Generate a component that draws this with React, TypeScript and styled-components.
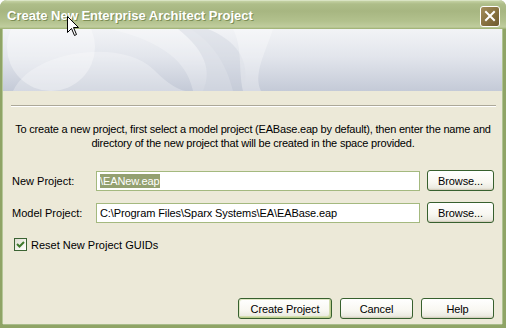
import React from "react";
import styled, { createGlobalStyle } from "styled-components";

const Global = createGlobalStyle`
  html, body { margin: 0; padding: 0; background: #ffffff; }
  body { font-family: Tahoma, "Liberation Sans", Arial, sans-serif; }
  * { box-sizing: border-box; }
`;

const Window = styled.div`
  position: relative;
  width: 506px;
  height: 328px;
  display: flex;
  flex-direction: column;
  background: #8fa466;
  border-radius: 7px 7px 0 0;
  overflow: hidden;
`;

const TitleBar = styled.div`
  height: 29px;
  flex: none;
  display: flex;
  align-items: center;
  justify-content: space-between;
  padding: 0 6px 0 7px;
  background: linear-gradient(
    to bottom,
    #c4d1a3 0px,
    #aebd89 3px,
    #a7b681 10px,
    #b2c18d 20px,
    #c0cd9e 26px,
    #9aae6e 28px,
    #8aa062 29px
  );
  border-top: 1px solid #d9e3c3;
`;

const TitleText = styled.span`
  font-family: "Liberation Sans", Arial, sans-serif;
  font-weight: bold;
  font-size: 13px;
  letter-spacing: 0px;
  color: #ffffff;
  text-shadow: 1px 1px 0 #7c8d55;
  margin-top: 1px;
`;

const CloseButton = styled.div`
  width: 20px;
  height: 21px;
  margin-top: 2px;
  border: 1px solid #ffffff;
  border-radius: 3px;
  background: linear-gradient(135deg, #a38d5c 0%, #86703f 55%, #6e5a30 100%);
  display: flex;
  align-items: center;
  justify-content: center;
`;

const Frame = styled.div`
  flex: 1;
  display: flex;
  flex-direction: column;
  margin: 0 4px 4px 3px;
  background: #ece9d8;
  box-shadow: -1px 0 0 #b5c798, 1px 0 0 #b0c392, 0 1px 0 #a9bc8b;
`;

const Banner = styled.div`
  height: 62px;
  flex: none;
  position: relative;
  overflow: hidden;
  background: linear-gradient(to bottom, #f2f3f6 0%, #e2e5ec 45%, #c4cad7 100%);
`;

const Watermark = styled.svg`
  position: absolute;
  left: 0;
  top: 0;
`;

const Content = styled.div`
  flex: 1;
  display: flex;
  flex-direction: column;
  padding: 14px 8px 0 9px;
  font-family: "Liberation Sans", Arial, sans-serif;
  font-size: 11px;
  color: #000000;
`;

const Separator = styled.div`
  height: 2px;
  margin: 0 -2px 0 -1px;
  border-top: 1px solid #aca899;
  border-bottom: 1px solid #ffffff;
`;

const Intro = styled.p`
  margin: 15px -4px 0 -4px;
  line-height: 14px;
  text-align: center;
  white-space: nowrap;
  letter-spacing: -0.2px;
`;

const Form = styled.div`
  margin-top: 20px;
  display: grid;
  grid-template-columns: 77px 1fr 67px;
  column-gap: 7px;
  row-gap: 11px;
  align-items: center;
`;

const Label = styled.span`
  line-height: 14px;
`;

const Input = styled.div`
  height: 20px;
  border: 1px solid #a4b97f;
  background: #ffffff;
  display: flex;
  align-items: center;
  padding-left: 3px;
  white-space: nowrap;
  overflow: hidden;
  letter-spacing: -0.1px;
`;

const Selected = styled.span`
  background: #93a070;
  color: #ffffff;
  line-height: 14px;
`;

const Button = styled.div<{ $default?: boolean; $w?: number }>`
  height: 21px;
  width: ${(p) => (p.$w ? `${p.$w}px` : "auto")};
  border: 1px solid #37602e;
  border-radius: 3px;
  background: linear-gradient(to bottom, #ffffff 0%, #f8f7f1 60%, #ecebe2 88%, #d8d5c4 100%);
  display: flex;
  align-items: center;
  justify-content: center;
  box-shadow: ${(p) =>
    p.$default
      ? "inset -1px -1px 0 #bdcc8e, inset 1px 1px 0 #dfe8c4, inset -2px -2px 0 #d3deb0"
      : "inset 0 -1px 0 #d6d0c0"};
  letter-spacing: -0.1px;
`;

const CheckRow = styled.label`
  margin-top: 15px;
  margin-left: 2px;
  display: flex;
  align-items: center;
  gap: 4px;
`;

const CheckBox = styled.span`
  width: 13px;
  height: 13px;
  border: 1px solid #3b6333;
  background: linear-gradient(135deg, #dcdcd0 0%, #f4f4ee 60%, #ffffff 100%);
  display: flex;
  align-items: center;
  justify-content: center;
`;

const Footer = styled.div`
  margin-top: auto;
  margin-bottom: 5px;
  display: flex;
  justify-content: flex-end;
  gap: 8px;
`;

const Cursor = styled.svg`
  position: absolute;
  left: 67px;
  top: 16px;
`;

export default function App() {
  return (
    <>
      <Global />
      <Window>
        <TitleBar>
          <TitleText>Create New Enterprise Architect Project</TitleText>
          <CloseButton>
            <svg width="12" height="12" viewBox="0 0 12 12">
              <path d="M2 2 L10 10 M10 2 L2 10" stroke="#ffffff" strokeWidth="2" strokeLinecap="square" />
            </svg>
          </CloseButton>
        </TitleBar>
        <Frame>
          <Banner>
            <Watermark width="499" height="62" viewBox="0 0 499 62">
              <circle cx="48" cy="18" r="44" fill="#ffffff" opacity="0.35" />
              <path d="M10 62 C 30 20, 120 10, 150 40 C 170 60, 180 62, 185 62 Z" fill="#ffffff" opacity="0.28" />
              <path d="M60 -10 C 110 0, 180 10, 190 62 L 230 62 C 220 20, 190 -10, 150 -10 Z" fill="#ffffff" opacity="0.25" />
              <path d="M175 0 C 200 20, 210 40, 200 62 L 240 62 C 250 30, 230 10, 205 0 Z" fill="#c9cfdb" opacity="0.35" />
              <path d="M230 0 L 270 0 C 262 25, 250 45, 258 62 L 240 62 C 235 40, 240 20, 230 0 Z" fill="#ffffff" opacity="0.3" />
            </Watermark>
          </Banner>
          <Content>
            <Separator />
            <Intro>
              To create a new project, first select a model project (EABase.eap by default), then enter the name and
              <br />
              directory of the new project that will be created in the space provided.
            </Intro>
            <Form>
              <Label>New Project:</Label>
              <Input>
                <Selected>\EANew.eap</Selected>
              </Input>
              <Button>Browse...</Button>
              <Label>Model Project:</Label>
              <Input>C:\Program Files\Sparx Systems\EA\EABase.eap</Input>
              <Button>Browse...</Button>
            </Form>
            <CheckRow>
              <CheckBox>
                <svg width="9" height="9" viewBox="0 0 9 9">
                  <path d="M1 4 L3.5 6.5 L8 2" stroke="#3f7a2c" strokeWidth="2" fill="none" />
                </svg>
              </CheckBox>
              <span>Reset New Project GUIDs</span>
            </CheckRow>
            <Footer>
              <Button $default $w={94}>Create Project</Button>
              <Button $w={73}>Cancel</Button>
              <Button $w={73}>Help</Button>
            </Footer>
          </Content>
        </Frame>
        <Cursor width="13" height="22" viewBox="0 0 13 22">
          <path
            d="M0.5 0.5 L0.5 16.5 L4.5 12.5 L7.5 19.5 L9.5 18.5 L6.5 11.5 L11.5 11.5 Z"
            fill="#ffffff"
            stroke="#000000"
            strokeWidth="1"
          />
        </Cursor>
      </Window>
    </>
  );
}
